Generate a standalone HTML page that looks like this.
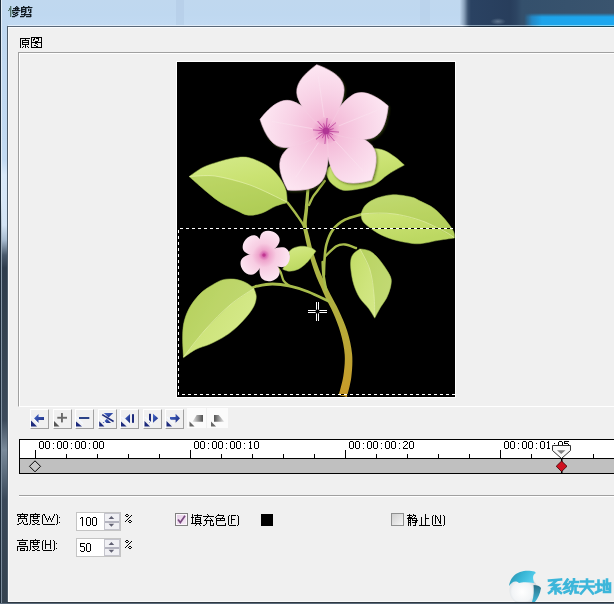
<!DOCTYPE html>
<html><head><meta charset="utf-8">
<style>
*{margin:0;padding:0;box-sizing:border-box}
html,body{width:614px;height:604px;overflow:hidden;background:#f0f0f0;font-family:"Liberation Sans",sans-serif;font-size:12px;color:#000}
.a{position:absolute}
#title{left:0;top:0;width:614px;height:25px;background:linear-gradient(180deg,#c0d8ef 0%,#bfd8f0 60%,#c2daf2 100%)}
#frameL{left:0;top:0;width:8px;height:604px;background:linear-gradient(180deg,#a9c3de 0%,#b8d0ea 30%,#8aa4c0 45%,#44546a 60%,#3c4a5c 100%)}
#client{left:8px;top:26px;width:606px;height:576px;background:#f0f0f0;border-top:1px solid #4e5a68;border-left:1px solid #56626e}
#frameB{left:0;top:601px;width:614px;height:3px;background:#3a4656}
.txt{white-space:nowrap;line-height:1}.cj{font-weight:bold}
.btn{position:absolute;top:409px;width:19px;height:20px;border-top:1px solid #fff;border-left:1px solid #fff;border-right:1px solid #a0a0a0;border-bottom:1px solid #a0a0a0;background:#f0f0f0}
.tc{position:absolute;top:440px;font-size:11px;line-height:11px;white-space:nowrap}.tc i{font-style:normal;display:inline-block;width:6px;text-align:center}
</style></head><body>
<div id="title" class="a"></div>
<div class="a" style="left:176px;top:0;width:8px;height:25px;background:#b0c8e2;opacity:.45"></div>
<div class="a" style="left:420px;top:0;width:10px;height:25px;background:#b8d0ea;opacity:.6"></div>
<div class="a" style="left:460px;top:0;width:154px;height:25px;background:linear-gradient(90deg,#bcd4ec 0px,#8aa2bc 4px,#3c5472 8px,#2a4262 11px,#283e5c 50px,#2c4462 56px,#34506c 62px,#3a546e 154px)"></div>
<div class="a" style="left:490px;top:18px;width:16px;height:7px;border-radius:50%;background:radial-gradient(ellipse at center,rgba(140,160,180,.55),rgba(140,160,180,0) 70%)"></div>
<div class="a" style="left:524px;top:13px;width:90px;height:12px;background:linear-gradient(90deg,rgba(30,160,235,0) 0px,rgba(30,160,235,.7) 8px,#1ea4ea 18px,#1ea8f0 94px);-webkit-mask-image:linear-gradient(180deg,transparent 0px,#000 4px)"></div>
<div class="a" style="left:0;top:25px;width:614px;height:1px;background:linear-gradient(90deg,#e2eefa 0px,#e2eefa 462px,#8aa0b4 470px,#8aa0b4 524px,#80d4f6 540px,#80d8f8 614px)"></div>
<div class="a" style="left:0;top:26px;width:614px;height:1px;background:linear-gradient(90deg,#5a6878 0px,#5a6878 462px,#1c2a3a 470px,#1c2a3a 524px,#1a4a5c 540px,#1a4a5c 614px)"></div>

<div class="a" style="left:0;top:0;width:8px;height:604px;background:linear-gradient(180deg,#c0d8f0 0px,#c2daf2 160px,#d8e8f8 175px,#d4e4f4 225px,#a8bcd0 240px,#4a5a6c 255px,#2e3c4c 268px,#34424f 330px,#3c4a5a 420px,#7a8a9a 450px,#5a6a7a 475px,#3a4858 500px,#34424f 604px)"></div>
<div class="a" style="left:0;top:0;width:1px;height:604px;background:#1e2c3a"></div>
<div class="a" style="left:1px;top:0;width:1px;height:604px;background:linear-gradient(180deg,#e4eef8 0px,#e4eef8 200px,#8898a8 260px,#7a8a9a 604px)"></div>
<div class="a" style="left:7px;top:26px;width:1px;height:577px;background:#4e5c6a"></div>
<div class="a" style="left:8px;top:27px;width:606px;height:575px;background:#f0f0f0;border-top:1px solid #fafcfe;border-left:1px solid #fafafa;border-bottom:1px solid #fafafa"></div>
<div class="a" style="left:7px;top:602px;width:607px;height:1px;background:#2e3842"></div>
<div class="a" style="left:0;top:603px;width:614px;height:1px;background:#5a6a7a"></div>

<!-- group box -->

<div class="a" style="left:18px;top:52px;width:596px;height:355px;border-top:1px solid #a0a0a0;border-left:1px solid #a0a0a0;border-bottom:1px solid #fff"></div>
<div class="a" style="left:19px;top:53px;width:1px;height:353px;background:#fff"></div>
<div class="a" style="left:19px;top:53px;width:595px;height:1px;background:#fff"></div>

<!-- image -->
<svg class="a" style="left:176px;top:61px" width="280" height="337" viewBox="176 61 280 337">
  <defs>
    <filter id="psh" x="-20%" y="-20%" width="140%" height="140%"><feDropShadow dx="1.2" dy="1.2" stdDeviation="0.9" flood-color="#3a4a10" flood-opacity="0.75"/></filter>
    <radialGradient id="pg" cx="0" cy="0" r="68" gradientUnits="userSpaceOnUse">
      <stop offset="0" stop-color="#b03494"/>
      <stop offset="0.04" stop-color="#c858a8"/>
      <stop offset="0.09" stop-color="#e892c6"/>
      <stop offset="0.2" stop-color="#f4bcd9"/>
      <stop offset="0.55" stop-color="#f8d2e6"/>
      <stop offset="1" stop-color="#fde8f3"/>
    </radialGradient>
    <radialGradient id="pg2" cx="0" cy="0" r="27" gradientUnits="userSpaceOnUse">
      <stop offset="0" stop-color="#c03894"/>
      <stop offset="0.08" stop-color="#d868b0"/>
      <stop offset="0.2" stop-color="#eea4cc"/>
      <stop offset="0.45" stop-color="#f7cce2"/>
      <stop offset="1" stop-color="#fde8f3"/>
    </radialGradient>
    <linearGradient id="stem" x1="0" y1="185" x2="0" y2="396" gradientUnits="userSpaceOnUse">
      <stop offset="0" stop-color="#a8c050"/>
      <stop offset="0.55" stop-color="#b0b040"/>
      <stop offset="1" stop-color="#c89a28"/>
    </linearGradient>
    <linearGradient id="lfA" x1="0" y1="0" x2="0.3" y2="1">
      <stop offset="0" stop-color="#d4ea8a"/>
      <stop offset="0.5" stop-color="#cae272"/>
      <stop offset="1" stop-color="#bcd862"/>
    </linearGradient>
    <linearGradient id="lfB" x1="0" y1="0" x2="1" y2="0.6">
      <stop offset="0" stop-color="#c2dc66"/>
      <stop offset="0.5" stop-color="#cee47c"/>
      <stop offset="1" stop-color="#d6ea8c"/>
    </linearGradient>
  <clipPath id="cl_topleft"><path d="M189.1 176.5 C189.1 176.5 197.9 169.9 202.8 167.4 C207.8 164.9 213.9 163.2 218.8 161.7 C223.7 160.2 227.9 159.0 232.4 158.2 C236.9 157.4 241.5 156.5 246.1 157.1 C250.7 157.7 255.6 159.8 259.8 161.7 C264.0 163.6 267.8 165.7 271.2 168.5 C274.6 171.3 277.8 175.2 280.3 178.8 C282.8 182.4 284.9 186.2 286.0 190.2 C287.1 194.2 287.2 202.7 287.2 202.7 C287.2 202.7 280.0 204.4 275.8 206.1 C271.6 207.8 266.7 211.5 262.1 213.0 C257.5 214.5 252.6 215.6 248.4 215.2 C244.2 214.8 241.6 212.8 237.0 210.7 C232.4 208.6 225.9 205.8 221.0 202.7 C216.1 199.6 212.7 196.8 207.4 192.4 C202.1 188.0 189.1 176.5 189.1 176.5 Z"/></clipPath><clipPath id="cl_rmid"><path d="M361.0 214.1 C361.0 214.1 362.9 207.7 365.6 205.0 C368.3 202.3 372.4 199.8 377.0 198.1 C381.6 196.4 387.3 194.9 393.0 194.7 C398.7 194.5 406.6 195.9 411.2 197.0 C415.8 198.1 416.5 199.2 420.3 201.1 C424.1 203.0 429.8 205.3 434.0 208.4 C438.2 211.5 442.2 216.0 445.4 219.8 C448.6 223.6 451.9 228.2 453.4 231.2 C454.9 234.2 454.5 238.0 454.5 238.0 C454.5 238.0 444.3 239.4 438.6 240.3 C432.9 241.2 425.6 243.3 420.3 243.7 C415.0 244.1 411.9 243.5 406.6 242.6 C401.3 241.7 393.7 239.9 388.4 238.0 C383.1 236.1 378.9 233.8 374.7 231.2 C370.5 228.5 365.6 224.9 363.3 222.1 C361.0 219.2 361.0 214.1 361.0 214.1 Z"/></clipPath><clipPath id="cl_rlow"><path d="M359.8 248.9 C359.8 248.9 367.0 249.4 370.2 251.2 C373.4 252.9 376.5 256.3 379.2 259.4 C381.9 262.5 384.6 266.6 386.6 269.8 C388.6 273.0 390.5 275.7 391.1 278.7 C391.7 281.7 391.1 284.5 390.4 287.7 C389.6 290.9 388.2 294.9 386.6 298.1 C385.0 301.3 382.7 303.8 380.7 307.1 C378.7 310.5 374.7 318.2 374.7 318.2 C374.7 318.2 371.2 312.0 368.7 308.6 C366.2 305.2 362.3 302.1 359.8 298.1 C357.3 294.1 355.3 289.4 353.8 284.7 C352.3 280.0 351.4 274.0 350.9 269.8 C350.4 265.6 350.4 262.1 350.9 259.4 C351.4 256.7 352.3 255.2 353.8 253.4 C355.3 251.7 359.8 248.9 359.8 248.9 Z"/></clipPath><clipPath id="cl_llow"><path d="M253.8 288.2 C253.8 288.2 248.8 283.9 245.5 282.4 C242.2 280.9 237.8 279.5 234.0 279.1 C230.2 278.7 226.0 278.9 222.4 279.9 C218.8 280.9 215.7 283.0 212.4 284.9 C209.1 286.8 205.5 288.9 202.5 291.5 C199.5 294.1 196.7 297.3 194.2 300.6 C191.7 303.9 189.4 307.4 187.6 311.4 C185.8 315.4 184.3 319.9 183.5 324.6 C182.7 329.3 182.6 334.0 182.6 339.5 C182.6 345.0 183.5 357.7 183.5 357.7 C183.5 357.7 191.6 351.6 195.9 349.4 C200.2 347.2 204.7 346.4 209.1 344.5 C213.5 342.6 218.2 340.3 222.4 337.8 C226.6 335.3 230.2 332.9 234.0 329.6 C237.8 326.3 242.2 321.9 245.5 318.0 C248.8 314.1 252.0 310.0 253.8 306.4 C255.6 302.8 256.3 299.5 256.3 296.5 C256.3 293.5 253.8 288.2 253.8 288.2 Z"/></clipPath></defs>
  <rect x="176" y="61" width="280" height="337" fill="#fff"/>
  <rect x="177" y="62" width="278" height="335" fill="#000"/>
  <!-- stems -->
  <path d="M306.7 185.9 C306.7 185.9 305.4 201.5 304.8 208.0 C304.2 214.4 302.9 219.7 303.0 224.8 C303.1 229.8 304.3 233.3 305.3 238.4 C306.4 243.4 307.7 249.4 309.3 255.1 C310.9 260.9 313.1 267.7 315.0 272.9 C316.8 278.0 318.8 282.0 320.5 286.1 C322.3 290.2 323.3 292.7 325.4 297.3 C327.5 301.8 330.7 307.3 333.3 313.3 C335.8 319.2 338.7 326.0 340.6 332.9 C342.5 339.9 344.3 347.5 344.7 354.7 C345.2 361.9 344.3 369.5 343.3 376.3 C342.3 383.0 338.7 395.0 338.7 395.0 C338.7 395.0 346.9 397.0 346.9 397.0 C346.9 397.0 350.4 384.5 351.3 377.3 C352.1 370.2 352.8 361.8 352.1 354.1 C351.4 346.4 349.4 338.3 347.2 331.1 C345.0 323.8 341.7 316.8 338.9 310.7 C336.2 304.7 332.9 299.2 330.6 294.7 C328.4 290.3 327.3 287.8 325.5 283.9 C323.6 280.0 321.6 276.1 319.6 271.1 C317.7 266.1 315.4 259.5 313.7 253.9 C312.0 248.2 310.6 242.3 309.5 237.4 C308.3 232.6 307.0 229.5 306.8 224.6 C306.6 219.8 307.7 214.7 308.2 208.2 C308.7 201.8 309.7 186.1 309.7 186.1 C309.7 186.1 306.7 185.9 306.7 185.9 Z" fill="url(#stem)"/><path d="M324.7 181.0 C323.6 182.5 319.9 187.4 318.0 190.0 C316.1 192.6 314.6 194.0 313.1 196.5 C311.6 199.0 309.7 203.6 309.0 205.0" fill="none" stroke="#a8bc4c" stroke-width="2.4" stroke-linecap="round"/><path d="M287.5 202.5 C289.0 204.5 294.0 211.0 296.6 214.7 C299.2 218.4 301.7 221.8 303.2 224.7 C304.7 227.6 305.1 230.8 305.5 232.0" fill="none" stroke="#a8bc4c" stroke-width="2.4" stroke-linecap="round"/><path d="M323.9 275.0 C324.0 272.5 324.1 265.1 324.5 260.0 C324.9 254.9 325.0 249.6 326.4 244.5 C327.8 239.4 329.9 233.7 333.0 229.6 C336.1 225.5 340.3 222.2 345.0 219.7 C349.7 217.2 358.3 215.4 361.0 214.5" fill="none" stroke="#a8bc4c" stroke-width="2.6" stroke-linecap="round"/><path d="M325.5 256.0 C327.3 254.4 333.1 248.1 336.3 246.2 C339.6 244.3 341.7 244.2 345.0 244.5 C348.3 244.8 354.2 247.4 356.0 248.0" fill="none" stroke="#a8bc4c" stroke-width="2.4" stroke-linecap="round"/><path d="M328.2 301.0 C324.9 299.5 314.4 294.3 308.1 291.8 C301.8 289.3 296.1 287.5 290.2 286.2 C284.2 284.9 278.0 284.0 272.4 284.0 C266.8 284.0 260.1 285.5 256.7 286.2 C253.3 286.9 252.8 287.7 252.0 288.0" fill="none" stroke="#a8bc4c" stroke-width="2.8" stroke-linecap="round"/><path d="M265.0 259.0 C267.3 260.8 275.9 265.9 279.0 269.5 C282.1 273.1 281.7 277.8 283.5 280.6 C285.3 283.4 288.9 285.3 290.0 286.2" fill="none" stroke="#a8bc4c" stroke-width="2.2" stroke-linecap="round"/><path d="M322.7 262.0 C322.8 264.2 322.9 270.3 323.5 275.0 C324.1 279.7 325.6 287.5 326.0 290.0" fill="none" stroke="#a8bc4c" stroke-width="2.6" stroke-linecap="round"/>
  <!-- leaves -->
  <path d="M404.4 165.1 C404.4 165.1 398.6 159.6 395.2 157.1 C391.8 154.6 387.7 151.7 383.8 150.3 C379.9 148.9 376.8 148.2 372.0 148.5 C367.2 148.8 360.3 150.1 355.0 152.0 C349.7 153.9 344.3 157.5 340.0 160.0 C335.7 162.5 331.2 164.6 329.0 167.0 C326.8 169.4 326.4 171.5 326.8 174.2 C327.2 176.9 328.7 180.6 331.4 183.3 C334.1 186.0 338.2 189.2 342.8 190.2 C347.4 191.1 353.5 189.9 358.8 189.0 C364.1 188.1 369.8 187.0 374.7 184.5 C379.6 182.0 383.4 177.4 388.4 174.2 C393.3 171.0 404.4 165.1 404.4 165.1 Z" fill="url(#lfA)" stroke="#9cb850" stroke-width="0.5"/><path d="M189.1 176.5 C189.1 176.5 197.9 169.9 202.8 167.4 C207.8 164.9 213.9 163.2 218.8 161.7 C223.7 160.2 227.9 159.0 232.4 158.2 C236.9 157.4 241.5 156.5 246.1 157.1 C250.7 157.7 255.6 159.8 259.8 161.7 C264.0 163.6 267.8 165.7 271.2 168.5 C274.6 171.3 277.8 175.2 280.3 178.8 C282.8 182.4 284.9 186.2 286.0 190.2 C287.1 194.2 287.2 202.7 287.2 202.7 C287.2 202.7 280.0 204.4 275.8 206.1 C271.6 207.8 266.7 211.5 262.1 213.0 C257.5 214.5 252.6 215.6 248.4 215.2 C244.2 214.8 241.6 212.8 237.0 210.7 C232.4 208.6 225.9 205.8 221.0 202.7 C216.1 199.6 212.7 196.8 207.4 192.4 C202.1 188.0 189.1 176.5 189.1 176.5 Z" fill="url(#lfA)" stroke="#9cb850" stroke-width="0.5"/><path d="M361.0 214.1 C361.0 214.1 362.9 207.7 365.6 205.0 C368.3 202.3 372.4 199.8 377.0 198.1 C381.6 196.4 387.3 194.9 393.0 194.7 C398.7 194.5 406.6 195.9 411.2 197.0 C415.8 198.1 416.5 199.2 420.3 201.1 C424.1 203.0 429.8 205.3 434.0 208.4 C438.2 211.5 442.2 216.0 445.4 219.8 C448.6 223.6 451.9 228.2 453.4 231.2 C454.9 234.2 454.5 238.0 454.5 238.0 C454.5 238.0 444.3 239.4 438.6 240.3 C432.9 241.2 425.6 243.3 420.3 243.7 C415.0 244.1 411.9 243.5 406.6 242.6 C401.3 241.7 393.7 239.9 388.4 238.0 C383.1 236.1 378.9 233.8 374.7 231.2 C370.5 228.5 365.6 224.9 363.3 222.1 C361.0 219.2 361.0 214.1 361.0 214.1 Z" fill="url(#lfA)" stroke="#9cb850" stroke-width="0.5"/><path d="M359.8 248.9 C359.8 248.9 367.0 249.4 370.2 251.2 C373.4 252.9 376.5 256.3 379.2 259.4 C381.9 262.5 384.6 266.6 386.6 269.8 C388.6 273.0 390.5 275.7 391.1 278.7 C391.7 281.7 391.1 284.5 390.4 287.7 C389.6 290.9 388.2 294.9 386.6 298.1 C385.0 301.3 382.7 303.8 380.7 307.1 C378.7 310.5 374.7 318.2 374.7 318.2 C374.7 318.2 371.2 312.0 368.7 308.6 C366.2 305.2 362.3 302.1 359.8 298.1 C357.3 294.1 355.3 289.4 353.8 284.7 C352.3 280.0 351.4 274.0 350.9 269.8 C350.4 265.6 350.4 262.1 350.9 259.4 C351.4 256.7 352.3 255.2 353.8 253.4 C355.3 251.7 359.8 248.9 359.8 248.9 Z" fill="url(#lfB)" stroke="#9cb850" stroke-width="0.5"/><path d="M253.8 288.2 C253.8 288.2 248.8 283.9 245.5 282.4 C242.2 280.9 237.8 279.5 234.0 279.1 C230.2 278.7 226.0 278.9 222.4 279.9 C218.8 280.9 215.7 283.0 212.4 284.9 C209.1 286.8 205.5 288.9 202.5 291.5 C199.5 294.1 196.7 297.3 194.2 300.6 C191.7 303.9 189.4 307.4 187.6 311.4 C185.8 315.4 184.3 319.9 183.5 324.6 C182.7 329.3 182.6 334.0 182.6 339.5 C182.6 345.0 183.5 357.7 183.5 357.7 C183.5 357.7 191.6 351.6 195.9 349.4 C200.2 347.2 204.7 346.4 209.1 344.5 C213.5 342.6 218.2 340.3 222.4 337.8 C226.6 335.3 230.2 332.9 234.0 329.6 C237.8 326.3 242.2 321.9 245.5 318.0 C248.8 314.1 252.0 310.0 253.8 306.4 C255.6 302.8 256.3 299.5 256.3 296.5 C256.3 293.5 253.8 288.2 253.8 288.2 Z" fill="url(#lfB)" stroke="#9cb850" stroke-width="0.5"/><path d="M316.0 251.1 C316.0 251.1 313.3 248.5 311.0 247.7 C308.7 246.9 305.1 246.2 302.3 246.2 C299.5 246.2 296.6 246.8 294.4 247.7 C292.2 248.6 289.9 250.4 289.1 251.6 C288.3 252.8 289.6 253.6 289.5 255.0 C289.4 256.4 289.5 257.9 288.5 260.0 C287.5 262.1 284.7 265.8 283.7 267.3 C282.7 268.8 282.7 269.2 282.7 269.2 C282.7 269.2 286.9 271.2 289.5 271.2 C292.1 271.2 295.5 270.5 298.3 269.2 C301.1 267.9 303.9 265.4 306.2 263.3 C308.5 261.2 310.4 258.5 312.0 256.5 C313.6 254.5 316.0 251.1 316.0 251.1 Z" fill="url(#lfA)" stroke="#9cb850" stroke-width="0.5"/><path d="M287 202 L250 185 L215 176 L189.5 176.5 L180 240 L300 240 Z" clip-path="url(#cl_topleft)" fill="#98b840" opacity="0.32"/><path d="M361 214 L395 214 L425 222 L454 237.5 L470 180 L350 180 Z" clip-path="url(#cl_rmid)" fill="#98b840" opacity="0.32"/><path d="M360 249 L370 270 L374 295 L374.7 317 L374.7 330 L400 330 L400 240 Z" clip-path="url(#cl_rlow)" fill="#98b840" opacity="0.32"/><path d="M253.8 288.5 L230 305 L205 330 L183.5 357 L170 370 L170 270 L260 270 Z" clip-path="url(#cl_llow)" fill="#98b840" opacity="0.32"/><path d="M287.0 202.0 C280.8 199.2 262.0 189.3 250.0 185.0 C238.0 180.7 225.1 177.4 215.0 176.0 C204.9 174.6 193.8 176.4 189.5 176.5" fill="none" stroke="#e2eea8" stroke-width="0.9" opacity="0.8"/><path d="M361 214 C372 213 385 212.5 395 214 C407 216 417 219 425 222 C436 227 447 232 454 237.5" fill="none" stroke="#e2eea8" stroke-width="0.9" opacity="0.8"/><path d="M360.0 249.0 C361.7 252.5 367.7 262.3 370.0 270.0 C372.3 277.7 373.2 287.2 374.0 295.0 C374.8 302.8 374.6 313.3 374.7 317.0" fill="none" stroke="#e2eea8" stroke-width="0.9" opacity="0.8"/><path d="M253.8 288.5 C249.8 291.2 238.1 298.1 230.0 305.0 C221.9 311.9 212.8 321.3 205.0 330.0 C197.2 338.7 187.1 352.5 183.5 357.0" fill="none" stroke="#e2eea8" stroke-width="0.9" opacity="0.8"/>
  <!-- big flower petals -->
  <g transform="translate(326 131)" filter="url(#psh)">
    <path transform="rotate(137)" d="M0 0 C-6 -6 -21 -23 -23.5 -38 C-25 -49 -17 -58 0 -67 C17 -58 25 -49 23.5 -38 C21 -23 6 -6 0 0 Z" fill="url(#pg)" stroke="#f6cfe2" stroke-width="0.5"/>
    <path transform="rotate(213) scale(1 1.05)" d="M0 0 C-6 -6 -21 -23 -23.5 -38 C-25 -49 -17 -58 0 -67 C17 -58 25 -49 23.5 -38 C21 -23 6 -6 0 0 Z" fill="url(#pg)" stroke="#f6cfe2" stroke-width="0.5"/>
    <path transform="rotate(68)" d="M0 0 C-6 -6 -21 -23 -23.5 -38 C-25 -49 -17 -58 0 -67 C17 -58 25 -49 23.5 -38 C21 -23 6 -6 0 0 Z" fill="url(#pg)" stroke="#f6cfe2" stroke-width="0.5"/>
    <path transform="rotate(280)" d="M0 0 C-6 -6 -21 -23 -23.5 -38 C-25 -49 -17 -58 0 -67 C17 -58 25 -49 23.5 -38 C21 -23 6 -6 0 0 Z" fill="url(#pg)" stroke="#f6cfe2" stroke-width="0.5"/>
    <path transform="rotate(-8)" d="M0 0 C-6 -6 -21 -23 -23.5 -38 C-25 -49 -17 -58 0 -67 C17 -58 25 -49 23.5 -38 C21 -23 6 -6 0 0 Z" fill="url(#pg)" stroke="#f6cfe2" stroke-width="0.5"/>
    <g stroke="#fae6f0" stroke-width="0.9" opacity="0.55"><line x1="9.5" y1="10.2" x2="37.5" y2="40.2"/><line x1="-7.6" y1="11.7" x2="-30.0" y2="46.1"/><line x1="13.0" y1="-5.2" x2="51.0" y2="-20.6"/><line x1="-13.8" y1="-2.4" x2="-54.2" y2="-9.6"/><line x1="-1.9" y1="-13.9" x2="-7.7" y2="-54.5"/></g><g stroke="#b83c98" stroke-width="1" opacity="0.75"><line x1="0" y1="0" x2="13.0" y2="1.1"/><line x1="0" y1="0" x2="7.1" y2="3.7"/><line x1="0" y1="0" x2="8.4" y2="10.0"/><line x1="0" y1="0" x2="2.4" y2="7.6"/><line x1="0" y1="0" x2="-1.1" y2="13.0"/><line x1="0" y1="0" x2="-3.7" y2="7.1"/><line x1="0" y1="0" x2="-10.0" y2="8.4"/><line x1="0" y1="0" x2="-7.6" y2="2.4"/><line x1="0" y1="0" x2="-13.0" y2="-1.1"/><line x1="0" y1="0" x2="-7.1" y2="-3.7"/><line x1="0" y1="0" x2="-8.4" y2="-10.0"/><line x1="0" y1="0" x2="-2.4" y2="-7.6"/><line x1="0" y1="0" x2="1.1" y2="-13.0"/><line x1="0" y1="0" x2="3.7" y2="-7.1"/><line x1="0" y1="0" x2="10.0" y2="-8.4"/><line x1="0" y1="0" x2="7.6" y2="-2.4"/></g>
    <circle r="3.2" fill="#b03494"/>
  </g>
  <!-- small flower -->
  <g transform="translate(264 255)">
    <path transform="rotate(-50) scale(1 0.923)" d="M0 0 C-6 -5 -10 -12 -10 -18 C-10 -23 -5 -26 0 -26 C5 -26 10 -23 10 -18 C10 -12 6 -5 0 0 Z" fill="url(#pg2)"/>
    <path transform="rotate(20) scale(1 0.962)" d="M0 0 C-6 -5 -10 -12 -10 -18 C-10 -23 -5 -26 0 -26 C5 -26 10 -23 10 -18 C10 -12 6 -5 0 0 Z" fill="url(#pg2)"/>
    <path transform="rotate(97) scale(1 1.000)" d="M0 0 C-6 -5 -10 -12 -10 -18 C-10 -23 -5 -26 0 -26 C5 -26 10 -23 10 -18 C10 -12 6 -5 0 0 Z" fill="url(#pg2)"/>
    <path transform="rotate(162) scale(1 1.038)" d="M0 0 C-6 -5 -10 -12 -10 -18 C-10 -23 -5 -26 0 -26 C5 -26 10 -23 10 -18 C10 -12 6 -5 0 0 Z" fill="url(#pg2)"/>
    <path transform="rotate(235) scale(1 1.000)" d="M0 0 C-6 -5 -10 -12 -10 -18 C-10 -23 -5 -26 0 -26 C5 -26 10 -23 10 -18 C10 -12 6 -5 0 0 Z" fill="url(#pg2)"/>
    <circle r="1.6" fill="#c03890"/>
  </g>
  <!-- dashed selection -->
  <path d="M178 228.5 H455 M178.5 228 V395 M178 394.5 H455" fill="none" stroke="#000" stroke-width="1"/>
  <path d="M178 228.5 H455" fill="none" stroke="#fff" stroke-width="1" stroke-dasharray="3 3" stroke-dashoffset="4"/>
  <path d="M178.5 228 V395" fill="none" stroke="#fff" stroke-width="1" stroke-dasharray="3 3" stroke-dashoffset="4"/>
  <path d="M178 394.5 H455" fill="none" stroke="#fff" stroke-width="1" stroke-dasharray="3 3" stroke-dashoffset="2"/>
  <!-- cursor -->
  <g fill="#fff">
  <rect x="316" y="302" width="1" height="8"/><rect x="318" y="302" width="1" height="8"/>
  <rect x="316" y="313" width="1" height="8"/><rect x="318" y="313" width="1" height="8"/>
  <rect x="308" y="310" width="8" height="1"/><rect x="308" y="312" width="8" height="1"/>
  <rect x="319" y="310" width="8" height="1"/><rect x="319" y="312" width="8" height="1"/>
  </g>
  <rect x="315.5" y="309.5" width="4" height="4" rx="1.5" fill="#000"/>
</svg>

<!-- toolbar -->
<div class="btn" style="left:30px"></div>
<div class="btn" style="left:53px"></div>
<div class="btn" style="left:75px"></div>
<div class="btn" style="left:98px"></div>
<div class="btn" style="left:120px"></div>
<div class="btn" style="left:143px"></div>
<div class="btn" style="left:165px"></div>
<div class="a" style="left:187px;top:408px;width:19px;height:20px;background:#fbfbfb"></div>
<div class="a" style="left:207px;top:408px;width:21px;height:20px;background:#fbfbfb"></div>
<svg class="a" style="left:0;top:400px" width="240" height="40" viewBox="0 400 240 40">
<defs>
<linearGradient id="bl" x1="0" y1="0" x2="1" y2="1"><stop offset="0" stop-color="#4a6cd0"/><stop offset="1" stop-color="#18287a"/></linearGradient>
<linearGradient id="g8" x1="0" y1="0" x2="1" y2="0"><stop offset="0" stop-color="#e8e8e8"/><stop offset="1" stop-color="#505050"/></linearGradient>
<linearGradient id="g9" x1="1" y1="0" x2="0" y2="0"><stop offset="0" stop-color="#e8e8e8"/><stop offset="1" stop-color="#505050"/></linearGradient>
</defs>
<g fill="url(#bl)">
<!-- b1 -->
<path d="M31 420.5 L31 426.5 L37 426.5 Z" fill="#1c2a7c"/>
<path d="M34 418.5 L38.5 414 L38.5 417 L44 417 L44 420 L38.5 420 L38.5 423 Z"/>
<!-- b3 -->
<path d="M76 421.5 L76 426.5 L82 426.5 Z" fill="#1c2a7c"/>
<rect x="79" y="417" width="10.3" height="2" fill="#2c4488"/>
<!-- b4 -->
<path d="M99.2 421.3 L99.2 426.4 L104.4 426.4 Z" fill="#1c2a7c"/>
<path d="M103.8 413 L113.2 413 L108.6 417.4 Z"/>
<path d="M102.6 423 L111 423 L106.8 418.8 Z"/>
<path d="M102.2 414.6 L113.6 421.5" stroke="#1c2a7c" stroke-width="1.6"/>
<!-- b5 -->
<path d="M121 421.5 L121 426.4 L126.6 426.4 Z" fill="#1c2a7c"/>
<path d="M125.1 418.5 L130 414 L130 423.2 Z"/>
<rect x="132" y="414.2" width="2" height="8.6" fill="#1c2a7c"/>
<!-- b6 -->
<path d="M144.5 421 L144.5 426.5 L150 426.5 Z" fill="#1c2a7c"/>
<rect x="149" y="413.8" width="2" height="9" fill="#1c2a7c"/>
<path d="M153 413.8 L158.2 418.3 L153 422.8 Z"/>
<!-- b7 -->
<path d="M166.5 421 L166.5 426.5 L172 426.5 Z" fill="#1c2a7c"/>
<path d="M170 417 L175.6 417 L175.6 413.8 L180 418.3 L175.6 422.8 L175.6 419.7 L170 419.7 Z"/>
</g>
<!-- b2 gray -->
<path d="M54 421 L54 426.5 L59.5 426.5 Z" fill="#555"/>
<rect x="57.3" y="416.8" width="9.7" height="1.9" fill="#6a6a6a"/>
<rect x="61" y="413" width="1.9" height="9.4" fill="#6a6a6a"/>
<!-- white stripes -->
<g stroke="#f4f8ff" stroke-width="1.4">
<path d="M31 416.5 L39 424.5"/>
<path d="M76 417 L83 424"/>
<path d="M100 417.5 L107 424.5"/>
<path d="M121.5 417 L129 424.5"/>
<path d="M145 417 L152 424"/>
<path d="M167 417 L174 424"/>
</g>
<!-- b8/b9 disabled -->
<path d="M189.5 421.5 L189.5 426.6 L194.5 426.6 Z" fill="#666"/>
<path d="M192.5 421.7 L196.7 414.9 L203 414.9 L203 421.7 Z" fill="url(#g8)"/>
<path d="M211 421.5 L211 426.6 L216 426.6 Z" fill="#666"/>
<path d="M214 414.9 L218.7 414.9 L224.3 421.7 L214 421.7 Z" fill="url(#g9)"/>
</svg>

<!-- timeline -->
<div class="a" style="left:19px;top:439px;width:595px;height:35px;border:1px solid #000;border-right:none;background:#fff"></div>
<div class="a" style="left:20px;top:458px;width:594px;height:1px;background:#000"></div>
<div class="a" style="left:20px;top:459px;width:594px;height:14px;background:#c0c0c0"></div>

<svg class="a" style="left:0;top:436px" width="614" height="42" viewBox="0 436 614 42">
<g fill="#000"><rect x="35" y="450" width="1" height="8"/><rect x="66" y="454" width="1" height="4"/><rect x="97" y="454" width="1" height="4"/><rect x="128" y="454" width="1" height="4"/><rect x="159" y="454" width="1" height="4"/><rect x="190" y="450" width="1" height="8"/><rect x="221" y="454" width="1" height="4"/><rect x="252" y="454" width="1" height="4"/><rect x="283" y="454" width="1" height="4"/><rect x="314" y="454" width="1" height="4"/><rect x="345" y="450" width="1" height="8"/><rect x="376" y="454" width="1" height="4"/><rect x="407" y="454" width="1" height="4"/><rect x="438" y="454" width="1" height="4"/><rect x="469" y="454" width="1" height="4"/><rect x="500" y="450" width="1" height="8"/><rect x="531" y="454" width="1" height="4"/><rect x="562" y="454" width="1" height="4"/><rect x="593" y="454" width="1" height="4"/></g>
<g fill="#000" shape-rendering="crispEdges"><rect x="40" y="441" width="3" height="1"/><rect x="46" y="441" width="3" height="1"/><rect x="58" y="441" width="3" height="1"/><rect x="64" y="441" width="3" height="1"/><rect x="76" y="441" width="3" height="1"/><rect x="82" y="441" width="3" height="1"/><rect x="94" y="441" width="3" height="1"/><rect x="100" y="441" width="3" height="1"/><rect x="195" y="441" width="3" height="1"/><rect x="201" y="441" width="3" height="1"/><rect x="213" y="441" width="3" height="1"/><rect x="219" y="441" width="3" height="1"/><rect x="231" y="441" width="3" height="1"/><rect x="237" y="441" width="3" height="1"/><rect x="250" y="441" width="1" height="1"/><rect x="255" y="441" width="3" height="1"/><rect x="350" y="441" width="3" height="1"/><rect x="356" y="441" width="3" height="1"/><rect x="368" y="441" width="3" height="1"/><rect x="374" y="441" width="3" height="1"/><rect x="386" y="441" width="3" height="1"/><rect x="392" y="441" width="3" height="1"/><rect x="404" y="441" width="3" height="1"/><rect x="410" y="441" width="3" height="1"/><rect x="505" y="441" width="3" height="1"/><rect x="511" y="441" width="3" height="1"/><rect x="523" y="441" width="3" height="1"/><rect x="529" y="441" width="3" height="1"/><rect x="541" y="441" width="3" height="1"/><rect x="548" y="441" width="1" height="1"/><rect x="559" y="441" width="3" height="1"/><rect x="564" y="441" width="5" height="1"/><rect x="39" y="442" width="1" height="1"/><rect x="43" y="442" width="1" height="1"/><rect x="45" y="442" width="1" height="1"/><rect x="49" y="442" width="1" height="1"/><rect x="57" y="442" width="1" height="1"/><rect x="61" y="442" width="1" height="1"/><rect x="63" y="442" width="1" height="1"/><rect x="67" y="442" width="1" height="1"/><rect x="75" y="442" width="1" height="1"/><rect x="79" y="442" width="1" height="1"/><rect x="81" y="442" width="1" height="1"/><rect x="85" y="442" width="1" height="1"/><rect x="93" y="442" width="1" height="1"/><rect x="97" y="442" width="1" height="1"/><rect x="99" y="442" width="1" height="1"/><rect x="103" y="442" width="1" height="1"/><rect x="194" y="442" width="1" height="1"/><rect x="198" y="442" width="1" height="1"/><rect x="200" y="442" width="1" height="1"/><rect x="204" y="442" width="1" height="1"/><rect x="212" y="442" width="1" height="1"/><rect x="216" y="442" width="1" height="1"/><rect x="218" y="442" width="1" height="1"/><rect x="222" y="442" width="1" height="1"/><rect x="230" y="442" width="1" height="1"/><rect x="234" y="442" width="1" height="1"/><rect x="236" y="442" width="1" height="1"/><rect x="240" y="442" width="1" height="1"/><rect x="249" y="442" width="2" height="1"/><rect x="254" y="442" width="1" height="1"/><rect x="258" y="442" width="1" height="1"/><rect x="349" y="442" width="1" height="1"/><rect x="353" y="442" width="1" height="1"/><rect x="355" y="442" width="1" height="1"/><rect x="359" y="442" width="1" height="1"/><rect x="367" y="442" width="1" height="1"/><rect x="371" y="442" width="1" height="1"/><rect x="373" y="442" width="1" height="1"/><rect x="377" y="442" width="1" height="1"/><rect x="385" y="442" width="1" height="1"/><rect x="389" y="442" width="1" height="1"/><rect x="391" y="442" width="1" height="1"/><rect x="395" y="442" width="1" height="1"/><rect x="403" y="442" width="1" height="1"/><rect x="407" y="442" width="1" height="1"/><rect x="409" y="442" width="1" height="1"/><rect x="413" y="442" width="1" height="1"/><rect x="504" y="442" width="1" height="1"/><rect x="508" y="442" width="1" height="1"/><rect x="510" y="442" width="1" height="1"/><rect x="514" y="442" width="1" height="1"/><rect x="522" y="442" width="1" height="1"/><rect x="526" y="442" width="1" height="1"/><rect x="528" y="442" width="1" height="1"/><rect x="532" y="442" width="1" height="1"/><rect x="540" y="442" width="1" height="1"/><rect x="544" y="442" width="1" height="1"/><rect x="547" y="442" width="2" height="1"/><rect x="558" y="442" width="1" height="1"/><rect x="562" y="442" width="1" height="1"/><rect x="564" y="442" width="1" height="1"/><rect x="39" y="443" width="1" height="1"/><rect x="43" y="443" width="1" height="1"/><rect x="45" y="443" width="1" height="1"/><rect x="49" y="443" width="1" height="1"/><rect x="53" y="443" width="1" height="1"/><rect x="57" y="443" width="1" height="1"/><rect x="61" y="443" width="1" height="1"/><rect x="63" y="443" width="1" height="1"/><rect x="67" y="443" width="1" height="1"/><rect x="71" y="443" width="1" height="1"/><rect x="75" y="443" width="1" height="1"/><rect x="79" y="443" width="1" height="1"/><rect x="81" y="443" width="1" height="1"/><rect x="85" y="443" width="1" height="1"/><rect x="89" y="443" width="1" height="1"/><rect x="93" y="443" width="1" height="1"/><rect x="97" y="443" width="1" height="1"/><rect x="99" y="443" width="1" height="1"/><rect x="103" y="443" width="1" height="1"/><rect x="194" y="443" width="1" height="1"/><rect x="198" y="443" width="1" height="1"/><rect x="200" y="443" width="1" height="1"/><rect x="204" y="443" width="1" height="1"/><rect x="208" y="443" width="1" height="1"/><rect x="212" y="443" width="1" height="1"/><rect x="216" y="443" width="1" height="1"/><rect x="218" y="443" width="1" height="1"/><rect x="222" y="443" width="1" height="1"/><rect x="226" y="443" width="1" height="1"/><rect x="230" y="443" width="1" height="1"/><rect x="234" y="443" width="1" height="1"/><rect x="236" y="443" width="1" height="1"/><rect x="240" y="443" width="1" height="1"/><rect x="244" y="443" width="1" height="1"/><rect x="250" y="443" width="1" height="1"/><rect x="254" y="443" width="1" height="1"/><rect x="258" y="443" width="1" height="1"/><rect x="349" y="443" width="1" height="1"/><rect x="353" y="443" width="1" height="1"/><rect x="355" y="443" width="1" height="1"/><rect x="359" y="443" width="1" height="1"/><rect x="363" y="443" width="1" height="1"/><rect x="367" y="443" width="1" height="1"/><rect x="371" y="443" width="1" height="1"/><rect x="373" y="443" width="1" height="1"/><rect x="377" y="443" width="1" height="1"/><rect x="381" y="443" width="1" height="1"/><rect x="385" y="443" width="1" height="1"/><rect x="389" y="443" width="1" height="1"/><rect x="391" y="443" width="1" height="1"/><rect x="395" y="443" width="1" height="1"/><rect x="399" y="443" width="1" height="1"/><rect x="407" y="443" width="1" height="1"/><rect x="409" y="443" width="1" height="1"/><rect x="413" y="443" width="1" height="1"/><rect x="504" y="443" width="1" height="1"/><rect x="508" y="443" width="1" height="1"/><rect x="510" y="443" width="1" height="1"/><rect x="514" y="443" width="1" height="1"/><rect x="518" y="443" width="1" height="1"/><rect x="522" y="443" width="1" height="1"/><rect x="526" y="443" width="1" height="1"/><rect x="528" y="443" width="1" height="1"/><rect x="532" y="443" width="1" height="1"/><rect x="536" y="443" width="1" height="1"/><rect x="540" y="443" width="1" height="1"/><rect x="544" y="443" width="1" height="1"/><rect x="548" y="443" width="1" height="1"/><rect x="554" y="443" width="1" height="1"/><rect x="558" y="443" width="1" height="1"/><rect x="562" y="443" width="1" height="1"/><rect x="564" y="443" width="4" height="1"/><rect x="39" y="444" width="1" height="1"/><rect x="43" y="444" width="1" height="1"/><rect x="45" y="444" width="1" height="1"/><rect x="49" y="444" width="1" height="1"/><rect x="57" y="444" width="1" height="1"/><rect x="61" y="444" width="1" height="1"/><rect x="63" y="444" width="1" height="1"/><rect x="67" y="444" width="1" height="1"/><rect x="75" y="444" width="1" height="1"/><rect x="79" y="444" width="1" height="1"/><rect x="81" y="444" width="1" height="1"/><rect x="85" y="444" width="1" height="1"/><rect x="93" y="444" width="1" height="1"/><rect x="97" y="444" width="1" height="1"/><rect x="99" y="444" width="1" height="1"/><rect x="103" y="444" width="1" height="1"/><rect x="194" y="444" width="1" height="1"/><rect x="198" y="444" width="1" height="1"/><rect x="200" y="444" width="1" height="1"/><rect x="204" y="444" width="1" height="1"/><rect x="212" y="444" width="1" height="1"/><rect x="216" y="444" width="1" height="1"/><rect x="218" y="444" width="1" height="1"/><rect x="222" y="444" width="1" height="1"/><rect x="230" y="444" width="1" height="1"/><rect x="234" y="444" width="1" height="1"/><rect x="236" y="444" width="1" height="1"/><rect x="240" y="444" width="1" height="1"/><rect x="250" y="444" width="1" height="1"/><rect x="254" y="444" width="1" height="1"/><rect x="258" y="444" width="1" height="1"/><rect x="349" y="444" width="1" height="1"/><rect x="353" y="444" width="1" height="1"/><rect x="355" y="444" width="1" height="1"/><rect x="359" y="444" width="1" height="1"/><rect x="367" y="444" width="1" height="1"/><rect x="371" y="444" width="1" height="1"/><rect x="373" y="444" width="1" height="1"/><rect x="377" y="444" width="1" height="1"/><rect x="385" y="444" width="1" height="1"/><rect x="389" y="444" width="1" height="1"/><rect x="391" y="444" width="1" height="1"/><rect x="395" y="444" width="1" height="1"/><rect x="406" y="444" width="1" height="1"/><rect x="409" y="444" width="1" height="1"/><rect x="413" y="444" width="1" height="1"/><rect x="504" y="444" width="1" height="1"/><rect x="508" y="444" width="1" height="1"/><rect x="510" y="444" width="1" height="1"/><rect x="514" y="444" width="1" height="1"/><rect x="522" y="444" width="1" height="1"/><rect x="526" y="444" width="1" height="1"/><rect x="528" y="444" width="1" height="1"/><rect x="532" y="444" width="1" height="1"/><rect x="540" y="444" width="1" height="1"/><rect x="544" y="444" width="1" height="1"/><rect x="548" y="444" width="1" height="1"/><rect x="558" y="444" width="1" height="1"/><rect x="562" y="444" width="1" height="1"/><rect x="568" y="444" width="1" height="1"/><rect x="39" y="445" width="1" height="1"/><rect x="43" y="445" width="1" height="1"/><rect x="45" y="445" width="1" height="1"/><rect x="49" y="445" width="1" height="1"/><rect x="57" y="445" width="1" height="1"/><rect x="61" y="445" width="1" height="1"/><rect x="63" y="445" width="1" height="1"/><rect x="67" y="445" width="1" height="1"/><rect x="75" y="445" width="1" height="1"/><rect x="79" y="445" width="1" height="1"/><rect x="81" y="445" width="1" height="1"/><rect x="85" y="445" width="1" height="1"/><rect x="93" y="445" width="1" height="1"/><rect x="97" y="445" width="1" height="1"/><rect x="99" y="445" width="1" height="1"/><rect x="103" y="445" width="1" height="1"/><rect x="194" y="445" width="1" height="1"/><rect x="198" y="445" width="1" height="1"/><rect x="200" y="445" width="1" height="1"/><rect x="204" y="445" width="1" height="1"/><rect x="212" y="445" width="1" height="1"/><rect x="216" y="445" width="1" height="1"/><rect x="218" y="445" width="1" height="1"/><rect x="222" y="445" width="1" height="1"/><rect x="230" y="445" width="1" height="1"/><rect x="234" y="445" width="1" height="1"/><rect x="236" y="445" width="1" height="1"/><rect x="240" y="445" width="1" height="1"/><rect x="250" y="445" width="1" height="1"/><rect x="254" y="445" width="1" height="1"/><rect x="258" y="445" width="1" height="1"/><rect x="349" y="445" width="1" height="1"/><rect x="353" y="445" width="1" height="1"/><rect x="355" y="445" width="1" height="1"/><rect x="359" y="445" width="1" height="1"/><rect x="367" y="445" width="1" height="1"/><rect x="371" y="445" width="1" height="1"/><rect x="373" y="445" width="1" height="1"/><rect x="377" y="445" width="1" height="1"/><rect x="385" y="445" width="1" height="1"/><rect x="389" y="445" width="1" height="1"/><rect x="391" y="445" width="1" height="1"/><rect x="395" y="445" width="1" height="1"/><rect x="405" y="445" width="1" height="1"/><rect x="409" y="445" width="1" height="1"/><rect x="413" y="445" width="1" height="1"/><rect x="504" y="445" width="1" height="1"/><rect x="508" y="445" width="1" height="1"/><rect x="510" y="445" width="1" height="1"/><rect x="514" y="445" width="1" height="1"/><rect x="522" y="445" width="1" height="1"/><rect x="526" y="445" width="1" height="1"/><rect x="528" y="445" width="1" height="1"/><rect x="532" y="445" width="1" height="1"/><rect x="540" y="445" width="1" height="1"/><rect x="544" y="445" width="1" height="1"/><rect x="548" y="445" width="1" height="1"/><rect x="558" y="445" width="1" height="1"/><rect x="562" y="445" width="1" height="1"/><rect x="568" y="445" width="1" height="1"/><rect x="39" y="446" width="1" height="1"/><rect x="43" y="446" width="1" height="1"/><rect x="45" y="446" width="1" height="1"/><rect x="49" y="446" width="1" height="1"/><rect x="57" y="446" width="1" height="1"/><rect x="61" y="446" width="1" height="1"/><rect x="63" y="446" width="1" height="1"/><rect x="67" y="446" width="1" height="1"/><rect x="75" y="446" width="1" height="1"/><rect x="79" y="446" width="1" height="1"/><rect x="81" y="446" width="1" height="1"/><rect x="85" y="446" width="1" height="1"/><rect x="93" y="446" width="1" height="1"/><rect x="97" y="446" width="1" height="1"/><rect x="99" y="446" width="1" height="1"/><rect x="103" y="446" width="1" height="1"/><rect x="194" y="446" width="1" height="1"/><rect x="198" y="446" width="1" height="1"/><rect x="200" y="446" width="1" height="1"/><rect x="204" y="446" width="1" height="1"/><rect x="212" y="446" width="1" height="1"/><rect x="216" y="446" width="1" height="1"/><rect x="218" y="446" width="1" height="1"/><rect x="222" y="446" width="1" height="1"/><rect x="230" y="446" width="1" height="1"/><rect x="234" y="446" width="1" height="1"/><rect x="236" y="446" width="1" height="1"/><rect x="240" y="446" width="1" height="1"/><rect x="250" y="446" width="1" height="1"/><rect x="254" y="446" width="1" height="1"/><rect x="258" y="446" width="1" height="1"/><rect x="349" y="446" width="1" height="1"/><rect x="353" y="446" width="1" height="1"/><rect x="355" y="446" width="1" height="1"/><rect x="359" y="446" width="1" height="1"/><rect x="367" y="446" width="1" height="1"/><rect x="371" y="446" width="1" height="1"/><rect x="373" y="446" width="1" height="1"/><rect x="377" y="446" width="1" height="1"/><rect x="385" y="446" width="1" height="1"/><rect x="389" y="446" width="1" height="1"/><rect x="391" y="446" width="1" height="1"/><rect x="395" y="446" width="1" height="1"/><rect x="404" y="446" width="1" height="1"/><rect x="409" y="446" width="1" height="1"/><rect x="413" y="446" width="1" height="1"/><rect x="504" y="446" width="1" height="1"/><rect x="508" y="446" width="1" height="1"/><rect x="510" y="446" width="1" height="1"/><rect x="514" y="446" width="1" height="1"/><rect x="522" y="446" width="1" height="1"/><rect x="526" y="446" width="1" height="1"/><rect x="528" y="446" width="1" height="1"/><rect x="532" y="446" width="1" height="1"/><rect x="540" y="446" width="1" height="1"/><rect x="544" y="446" width="1" height="1"/><rect x="548" y="446" width="1" height="1"/><rect x="558" y="446" width="1" height="1"/><rect x="562" y="446" width="1" height="1"/><rect x="568" y="446" width="1" height="1"/><rect x="39" y="447" width="1" height="1"/><rect x="43" y="447" width="1" height="1"/><rect x="45" y="447" width="1" height="1"/><rect x="49" y="447" width="1" height="1"/><rect x="57" y="447" width="1" height="1"/><rect x="61" y="447" width="1" height="1"/><rect x="63" y="447" width="1" height="1"/><rect x="67" y="447" width="1" height="1"/><rect x="75" y="447" width="1" height="1"/><rect x="79" y="447" width="1" height="1"/><rect x="81" y="447" width="1" height="1"/><rect x="85" y="447" width="1" height="1"/><rect x="93" y="447" width="1" height="1"/><rect x="97" y="447" width="1" height="1"/><rect x="99" y="447" width="1" height="1"/><rect x="103" y="447" width="1" height="1"/><rect x="194" y="447" width="1" height="1"/><rect x="198" y="447" width="1" height="1"/><rect x="200" y="447" width="1" height="1"/><rect x="204" y="447" width="1" height="1"/><rect x="212" y="447" width="1" height="1"/><rect x="216" y="447" width="1" height="1"/><rect x="218" y="447" width="1" height="1"/><rect x="222" y="447" width="1" height="1"/><rect x="230" y="447" width="1" height="1"/><rect x="234" y="447" width="1" height="1"/><rect x="236" y="447" width="1" height="1"/><rect x="240" y="447" width="1" height="1"/><rect x="250" y="447" width="1" height="1"/><rect x="254" y="447" width="1" height="1"/><rect x="258" y="447" width="1" height="1"/><rect x="349" y="447" width="1" height="1"/><rect x="353" y="447" width="1" height="1"/><rect x="355" y="447" width="1" height="1"/><rect x="359" y="447" width="1" height="1"/><rect x="367" y="447" width="1" height="1"/><rect x="371" y="447" width="1" height="1"/><rect x="373" y="447" width="1" height="1"/><rect x="377" y="447" width="1" height="1"/><rect x="385" y="447" width="1" height="1"/><rect x="389" y="447" width="1" height="1"/><rect x="391" y="447" width="1" height="1"/><rect x="395" y="447" width="1" height="1"/><rect x="403" y="447" width="1" height="1"/><rect x="409" y="447" width="1" height="1"/><rect x="413" y="447" width="1" height="1"/><rect x="504" y="447" width="1" height="1"/><rect x="508" y="447" width="1" height="1"/><rect x="510" y="447" width="1" height="1"/><rect x="514" y="447" width="1" height="1"/><rect x="522" y="447" width="1" height="1"/><rect x="526" y="447" width="1" height="1"/><rect x="528" y="447" width="1" height="1"/><rect x="532" y="447" width="1" height="1"/><rect x="540" y="447" width="1" height="1"/><rect x="544" y="447" width="1" height="1"/><rect x="548" y="447" width="1" height="1"/><rect x="558" y="447" width="1" height="1"/><rect x="562" y="447" width="1" height="1"/><rect x="564" y="447" width="1" height="1"/><rect x="568" y="447" width="1" height="1"/><rect x="40" y="448" width="3" height="1"/><rect x="46" y="448" width="3" height="1"/><rect x="53" y="448" width="1" height="1"/><rect x="58" y="448" width="3" height="1"/><rect x="64" y="448" width="3" height="1"/><rect x="71" y="448" width="1" height="1"/><rect x="76" y="448" width="3" height="1"/><rect x="82" y="448" width="3" height="1"/><rect x="89" y="448" width="1" height="1"/><rect x="94" y="448" width="3" height="1"/><rect x="100" y="448" width="3" height="1"/><rect x="195" y="448" width="3" height="1"/><rect x="201" y="448" width="3" height="1"/><rect x="208" y="448" width="1" height="1"/><rect x="213" y="448" width="3" height="1"/><rect x="219" y="448" width="3" height="1"/><rect x="226" y="448" width="1" height="1"/><rect x="231" y="448" width="3" height="1"/><rect x="237" y="448" width="3" height="1"/><rect x="244" y="448" width="1" height="1"/><rect x="249" y="448" width="3" height="1"/><rect x="255" y="448" width="3" height="1"/><rect x="350" y="448" width="3" height="1"/><rect x="356" y="448" width="3" height="1"/><rect x="363" y="448" width="1" height="1"/><rect x="368" y="448" width="3" height="1"/><rect x="374" y="448" width="3" height="1"/><rect x="381" y="448" width="1" height="1"/><rect x="386" y="448" width="3" height="1"/><rect x="392" y="448" width="3" height="1"/><rect x="399" y="448" width="1" height="1"/><rect x="403" y="448" width="5" height="1"/><rect x="410" y="448" width="3" height="1"/><rect x="505" y="448" width="3" height="1"/><rect x="511" y="448" width="3" height="1"/><rect x="518" y="448" width="1" height="1"/><rect x="523" y="448" width="3" height="1"/><rect x="529" y="448" width="3" height="1"/><rect x="536" y="448" width="1" height="1"/><rect x="541" y="448" width="3" height="1"/><rect x="547" y="448" width="3" height="1"/><rect x="554" y="448" width="1" height="1"/><rect x="559" y="448" width="3" height="1"/><rect x="565" y="448" width="3" height="1"/></g>
<path d="M35 460.8 L40.5 466.3 L35 471.8 L29.5 466.3 Z" fill="#c8c8c8" stroke="#000" stroke-width="1"/>
<path d="M552.5 445.5 L570.5 445.5 L570.5 450.5 L561.5 458.5 L552.5 450.5 Z" fill="#fafafa" stroke="#303030" stroke-width="1"/>
<path d="M557 450.3 L565.5 450.3 L561.2 454 Z" fill="#808080"/>
<rect x="561" y="458" width="1.5" height="15" fill="#000"/>
<path d="M561.6 461 L567 466.3 L561.6 471.6 L556.2 466.3 Z" fill="#d01020" stroke="#300" stroke-width="0.8"/>
</svg>
<!-- separator -->
<div class="a" style="left:19px;top:495px;width:595px;height:1px;background:#a0a0a0"></div>
<div class="a" style="left:19px;top:496px;width:595px;height:1px;background:#fff"></div>

<!-- controls -->


<div class="a" style="left:76px;top:512px;width:45px;height:19px;border:1px solid #c4c4c4;background:#fff"></div>
<div class="a" style="left:104px;top:513px;width:16px;height:17px;border:1px solid #c4c4cc;background:#f0f0f4"></div>
<div class="a" style="left:105px;top:521px;width:14px;height:2px;background:#b4b4c0"></div>
<svg class="a" style="left:104px;top:512px" width="16" height="19" viewBox="0 0 16 19"><path d="M4.6 7 L7.4 4 L10.2 7 Z M4.6 11.8 L10.2 11.8 L7.4 14.8 Z" fill="#606072"/></svg>
<div class="a" style="left:76px;top:538px;width:45px;height:19px;border:1px solid #c4c4c4;background:#fff"></div>
<div class="a" style="left:104px;top:539px;width:16px;height:17px;border:1px solid #c4c4cc;background:#f0f0f4"></div>
<div class="a" style="left:105px;top:547px;width:14px;height:2px;background:#b4b4c0"></div>
<svg class="a" style="left:104px;top:538px" width="16" height="19" viewBox="0 0 16 19"><path d="M4.6 7 L7.4 4 L10.2 7 Z M4.6 11.8 L10.2 11.8 L7.4 14.8 Z" fill="#606072"/></svg>





<div class="a" style="left:175px;top:513px;width:13px;height:13px;border:1px solid #808080;background:#fbf6fb"></div>
<div class="a" style="left:177px;top:515px;width:9px;height:9px;background:linear-gradient(135deg,#e8d4ea,#f6e8f6)"></div>
<svg class="a" style="left:175px;top:513px" width="13" height="13" viewBox="0 0 13 13"><path d="M3 6.6 L5.3 9.6 L10 2.8" fill="none" stroke="#7a4a80" stroke-width="1.7"/></svg>

<div class="a" style="left:261px;top:514px;width:12px;height:12px;background:#000"></div>

<div class="a" style="left:391px;top:513px;width:13px;height:13px;border:1px solid #8e8f8f;background:linear-gradient(135deg,#cfcfcf,#f6f6f6)"></div>


<!-- glyphs -->
<svg class="a" style="left:0;top:0" width="614" height="604" viewBox="0 0 614 604" shape-rendering="crispEdges"><g opacity="0.45" transform="translate(1 0)"><g fill="#1a2a34"><rect x="23" y="6" width="1" height="1"/><rect x="28" y="6" width="1" height="1"/><rect x="21" y="7" width="11" height="1"/><rect x="21" y="8" width="1" height="1"/><rect x="25" y="8" width="1" height="1"/><rect x="21" y="9" width="5" height="1"/><rect x="28" y="9" width="1" height="1"/><rect x="30" y="9" width="1" height="1"/><rect x="21" y="10" width="1" height="1"/><rect x="25" y="10" width="1" height="1"/><rect x="28" y="10" width="1" height="1"/><rect x="30" y="10" width="1" height="1"/><rect x="21" y="11" width="5" height="1"/><rect x="30" y="11" width="1" height="1"/><rect x="21" y="12" width="1" height="1"/><rect x="25" y="12" width="1" height="1"/><rect x="29" y="12" width="2" height="1"/><rect x="24" y="13" width="1" height="1"/><rect x="21" y="14" width="10" height="1"/><rect x="24" y="15" width="1" height="1"/><rect x="30" y="15" width="1" height="1"/><rect x="20" y="16" width="4" height="1"/><rect x="26" y="16" width="5" height="1"/><rect x="16" y="6" width="1" height="1"/><rect x="15" y="7" width="1" height="1"/><rect x="17" y="7" width="1" height="1"/><rect x="13" y="8" width="6" height="1"/><rect x="15" y="9" width="1" height="1"/><rect x="17" y="9" width="1" height="1"/><rect x="12" y="10" width="8" height="1"/><rect x="13" y="12" width="2" height="1"/><rect x="16" y="12" width="2" height="1"/><rect x="15" y="13" width="2" height="1"/><rect x="13" y="14" width="2" height="1"/><rect x="17" y="14" width="1" height="1"/><rect x="15" y="15" width="2" height="1"/><rect x="12" y="16" width="3" height="1"/></g><g fill="#6a8a84"><rect x="10" y="6" width="1" height="1"/><rect x="10" y="7" width="1" height="1"/><rect x="9" y="8" width="2" height="1"/><rect x="9" y="9" width="2" height="1"/><rect x="8" y="10" width="1" height="1"/><rect x="10" y="10" width="1" height="1"/><rect x="10" y="11" width="1" height="1"/><rect x="12" y="11" width="1" height="1"/><rect x="10" y="12" width="1" height="1"/><rect x="12" y="12" width="1" height="1"/><rect x="10" y="13" width="1" height="1"/><rect x="12" y="13" width="1" height="1"/><rect x="10" y="14" width="1" height="1"/><rect x="10" y="15" width="1" height="1"/><rect x="10" y="16" width="1" height="1"/></g></g><g opacity="0.25" transform="translate(0 1)"><g fill="#1a2a34"><rect x="23" y="6" width="1" height="1"/><rect x="28" y="6" width="1" height="1"/><rect x="21" y="7" width="11" height="1"/><rect x="21" y="8" width="1" height="1"/><rect x="25" y="8" width="1" height="1"/><rect x="21" y="9" width="5" height="1"/><rect x="28" y="9" width="1" height="1"/><rect x="30" y="9" width="1" height="1"/><rect x="21" y="10" width="1" height="1"/><rect x="25" y="10" width="1" height="1"/><rect x="28" y="10" width="1" height="1"/><rect x="30" y="10" width="1" height="1"/><rect x="21" y="11" width="5" height="1"/><rect x="30" y="11" width="1" height="1"/><rect x="21" y="12" width="1" height="1"/><rect x="25" y="12" width="1" height="1"/><rect x="29" y="12" width="2" height="1"/><rect x="24" y="13" width="1" height="1"/><rect x="21" y="14" width="10" height="1"/><rect x="24" y="15" width="1" height="1"/><rect x="30" y="15" width="1" height="1"/><rect x="20" y="16" width="4" height="1"/><rect x="26" y="16" width="5" height="1"/><rect x="16" y="6" width="1" height="1"/><rect x="15" y="7" width="1" height="1"/><rect x="17" y="7" width="1" height="1"/><rect x="13" y="8" width="6" height="1"/><rect x="15" y="9" width="1" height="1"/><rect x="17" y="9" width="1" height="1"/><rect x="12" y="10" width="8" height="1"/><rect x="13" y="12" width="2" height="1"/><rect x="16" y="12" width="2" height="1"/><rect x="15" y="13" width="2" height="1"/><rect x="13" y="14" width="2" height="1"/><rect x="17" y="14" width="1" height="1"/><rect x="15" y="15" width="2" height="1"/><rect x="12" y="16" width="3" height="1"/></g></g><g fill="#141c24"><rect x="23" y="6" width="1" height="1"/><rect x="28" y="6" width="1" height="1"/><rect x="21" y="7" width="11" height="1"/><rect x="21" y="8" width="1" height="1"/><rect x="25" y="8" width="1" height="1"/><rect x="21" y="9" width="5" height="1"/><rect x="28" y="9" width="1" height="1"/><rect x="30" y="9" width="1" height="1"/><rect x="21" y="10" width="1" height="1"/><rect x="25" y="10" width="1" height="1"/><rect x="28" y="10" width="1" height="1"/><rect x="30" y="10" width="1" height="1"/><rect x="21" y="11" width="5" height="1"/><rect x="30" y="11" width="1" height="1"/><rect x="21" y="12" width="1" height="1"/><rect x="25" y="12" width="1" height="1"/><rect x="29" y="12" width="2" height="1"/><rect x="24" y="13" width="1" height="1"/><rect x="21" y="14" width="10" height="1"/><rect x="24" y="15" width="1" height="1"/><rect x="30" y="15" width="1" height="1"/><rect x="20" y="16" width="4" height="1"/><rect x="26" y="16" width="5" height="1"/><rect x="16" y="6" width="1" height="1"/><rect x="15" y="7" width="1" height="1"/><rect x="17" y="7" width="1" height="1"/><rect x="13" y="8" width="6" height="1"/><rect x="15" y="9" width="1" height="1"/><rect x="17" y="9" width="1" height="1"/><rect x="12" y="10" width="8" height="1"/><rect x="13" y="12" width="2" height="1"/><rect x="16" y="12" width="2" height="1"/><rect x="15" y="13" width="2" height="1"/><rect x="13" y="14" width="2" height="1"/><rect x="17" y="14" width="1" height="1"/><rect x="15" y="15" width="2" height="1"/><rect x="12" y="16" width="3" height="1"/></g><g fill="#50706a"><rect x="10" y="6" width="1" height="1"/><rect x="10" y="7" width="1" height="1"/><rect x="9" y="8" width="2" height="1"/><rect x="9" y="9" width="2" height="1"/><rect x="8" y="10" width="1" height="1"/><rect x="10" y="10" width="1" height="1"/><rect x="10" y="11" width="1" height="1"/><rect x="12" y="11" width="1" height="1"/><rect x="10" y="12" width="1" height="1"/><rect x="12" y="12" width="1" height="1"/><rect x="10" y="13" width="1" height="1"/><rect x="12" y="13" width="1" height="1"/><rect x="10" y="14" width="1" height="1"/><rect x="10" y="15" width="1" height="1"/><rect x="10" y="16" width="1" height="1"/></g><g fill="#000"><rect x="20" y="38" width="10" height="1"/><rect x="20" y="39" width="1" height="1"/><rect x="25" y="39" width="1" height="1"/><rect x="20" y="40" width="1" height="1"/><rect x="22" y="40" width="7" height="1"/><rect x="20" y="41" width="1" height="1"/><rect x="22" y="41" width="1" height="1"/><rect x="28" y="41" width="1" height="1"/><rect x="20" y="42" width="1" height="1"/><rect x="22" y="42" width="7" height="1"/><rect x="20" y="43" width="1" height="1"/><rect x="22" y="43" width="1" height="1"/><rect x="28" y="43" width="1" height="1"/><rect x="20" y="44" width="1" height="1"/><rect x="22" y="44" width="7" height="1"/><rect x="20" y="45" width="1" height="1"/><rect x="25" y="45" width="1" height="1"/><rect x="20" y="46" width="1" height="1"/><rect x="23" y="46" width="1" height="1"/><rect x="25" y="46" width="1" height="1"/><rect x="27" y="46" width="1" height="1"/><rect x="20" y="47" width="1" height="1"/><rect x="22" y="47" width="1" height="1"/><rect x="25" y="47" width="1" height="1"/><rect x="28" y="47" width="1" height="1"/><rect x="31" y="37" width="11" height="1"/><rect x="31" y="38" width="1" height="1"/><rect x="34" y="38" width="1" height="1"/><rect x="36" y="38" width="3" height="1"/><rect x="41" y="38" width="1" height="1"/><rect x="31" y="39" width="1" height="1"/><rect x="33" y="39" width="2" height="1"/><rect x="38" y="39" width="1" height="1"/><rect x="41" y="39" width="1" height="1"/><rect x="31" y="40" width="1" height="1"/><rect x="33" y="40" width="1" height="1"/><rect x="38" y="40" width="1" height="1"/><rect x="41" y="40" width="1" height="1"/><rect x="31" y="41" width="1" height="1"/><rect x="35" y="41" width="3" height="1"/><rect x="41" y="41" width="1" height="1"/><rect x="31" y="42" width="11" height="1"/><rect x="31" y="43" width="1" height="1"/><rect x="35" y="43" width="2" height="1"/><rect x="41" y="43" width="1" height="1"/><rect x="31" y="44" width="1" height="1"/><rect x="37" y="44" width="1" height="1"/><rect x="41" y="44" width="1" height="1"/><rect x="31" y="45" width="1" height="1"/><rect x="34" y="45" width="2" height="1"/><rect x="41" y="45" width="1" height="1"/><rect x="31" y="46" width="1" height="1"/><rect x="36" y="46" width="2" height="1"/><rect x="41" y="46" width="1" height="1"/><rect x="31" y="47" width="11" height="1"/><rect x="22" y="513" width="1" height="1"/><rect x="17" y="514" width="11" height="1"/><rect x="17" y="515" width="1" height="1"/><rect x="20" y="515" width="1" height="1"/><rect x="24" y="515" width="1" height="1"/><rect x="27" y="515" width="1" height="1"/><rect x="18" y="516" width="9" height="1"/><rect x="20" y="517" width="1" height="1"/><rect x="24" y="517" width="1" height="1"/><rect x="18" y="518" width="9" height="1"/><rect x="18" y="519" width="1" height="1"/><rect x="26" y="519" width="1" height="1"/><rect x="18" y="520" width="1" height="1"/><rect x="22" y="520" width="1" height="1"/><rect x="26" y="520" width="1" height="1"/><rect x="18" y="521" width="1" height="1"/><rect x="22" y="521" width="1" height="1"/><rect x="26" y="521" width="1" height="1"/><rect x="21" y="522" width="1" height="1"/><rect x="23" y="522" width="1" height="1"/><rect x="19" y="523" width="2" height="1"/><rect x="23" y="523" width="1" height="1"/><rect x="27" y="523" width="1" height="1"/><rect x="17" y="524" width="2" height="1"/><rect x="24" y="524" width="4" height="1"/><rect x="35" y="513" width="1" height="1"/><rect x="30" y="514" width="10" height="1"/><rect x="30" y="515" width="1" height="1"/><rect x="33" y="515" width="1" height="1"/><rect x="37" y="515" width="1" height="1"/><rect x="30" y="516" width="10" height="1"/><rect x="30" y="517" width="1" height="1"/><rect x="33" y="517" width="1" height="1"/><rect x="37" y="517" width="1" height="1"/><rect x="30" y="518" width="1" height="1"/><rect x="33" y="518" width="5" height="1"/><rect x="30" y="519" width="1" height="1"/><rect x="30" y="520" width="1" height="1"/><rect x="32" y="520" width="7" height="1"/><rect x="30" y="521" width="1" height="1"/><rect x="33" y="521" width="1" height="1"/><rect x="38" y="521" width="1" height="1"/><rect x="30" y="522" width="1" height="1"/><rect x="34" y="522" width="1" height="1"/><rect x="37" y="522" width="1" height="1"/><rect x="30" y="523" width="1" height="1"/><rect x="35" y="523" width="2" height="1"/><rect x="29" y="524" width="1" height="1"/><rect x="32" y="524" width="3" height="1"/><rect x="37" y="524" width="3" height="1"/><rect x="43" y="514" width="2" height="1"/><rect x="54" y="514" width="1" height="1"/><rect x="56" y="514" width="1" height="1"/><rect x="42" y="515" width="1" height="1"/><rect x="44" y="515" width="1" height="1"/><rect x="54" y="515" width="1" height="1"/><rect x="57" y="515" width="1" height="1"/><rect x="42" y="516" width="1" height="1"/><rect x="45" y="516" width="1" height="1"/><rect x="49" y="516" width="1" height="1"/><rect x="53" y="516" width="1" height="1"/><rect x="57" y="516" width="1" height="1"/><rect x="42" y="517" width="1" height="1"/><rect x="45" y="517" width="1" height="1"/><rect x="49" y="517" width="1" height="1"/><rect x="53" y="517" width="1" height="1"/><rect x="57" y="517" width="1" height="1"/><rect x="59" y="517" width="1" height="1"/><rect x="42" y="518" width="1" height="1"/><rect x="46" y="518" width="1" height="1"/><rect x="48" y="518" width="1" height="1"/><rect x="50" y="518" width="1" height="1"/><rect x="52" y="518" width="1" height="1"/><rect x="57" y="518" width="1" height="1"/><rect x="42" y="519" width="1" height="1"/><rect x="46" y="519" width="1" height="1"/><rect x="48" y="519" width="1" height="1"/><rect x="50" y="519" width="1" height="1"/><rect x="52" y="519" width="1" height="1"/><rect x="57" y="519" width="1" height="1"/><rect x="42" y="520" width="1" height="1"/><rect x="47" y="520" width="1" height="1"/><rect x="51" y="520" width="1" height="1"/><rect x="57" y="520" width="1" height="1"/><rect x="42" y="521" width="1" height="1"/><rect x="47" y="521" width="1" height="1"/><rect x="51" y="521" width="1" height="1"/><rect x="57" y="521" width="1" height="1"/><rect x="42" y="522" width="1" height="1"/><rect x="57" y="522" width="1" height="1"/><rect x="59" y="522" width="1" height="1"/><rect x="42" y="523" width="1" height="1"/><rect x="57" y="523" width="1" height="1"/><rect x="43" y="524" width="12" height="1"/><rect x="56" y="524" width="1" height="1"/><rect x="22" y="539" width="1" height="1"/><rect x="17" y="540" width="11" height="1"/><rect x="19" y="542" width="7" height="1"/><rect x="19" y="543" width="1" height="1"/><rect x="25" y="543" width="1" height="1"/><rect x="19" y="544" width="7" height="1"/><rect x="17" y="546" width="11" height="1"/><rect x="17" y="547" width="1" height="1"/><rect x="27" y="547" width="1" height="1"/><rect x="17" y="548" width="1" height="1"/><rect x="20" y="548" width="5" height="1"/><rect x="27" y="548" width="1" height="1"/><rect x="17" y="549" width="1" height="1"/><rect x="20" y="549" width="1" height="1"/><rect x="24" y="549" width="1" height="1"/><rect x="27" y="549" width="1" height="1"/><rect x="17" y="550" width="1" height="1"/><rect x="20" y="550" width="5" height="1"/><rect x="26" y="550" width="2" height="1"/><rect x="35" y="539" width="1" height="1"/><rect x="30" y="540" width="10" height="1"/><rect x="30" y="541" width="1" height="1"/><rect x="33" y="541" width="1" height="1"/><rect x="37" y="541" width="1" height="1"/><rect x="30" y="542" width="10" height="1"/><rect x="30" y="543" width="1" height="1"/><rect x="33" y="543" width="1" height="1"/><rect x="37" y="543" width="1" height="1"/><rect x="30" y="544" width="1" height="1"/><rect x="33" y="544" width="5" height="1"/><rect x="30" y="545" width="1" height="1"/><rect x="30" y="546" width="1" height="1"/><rect x="32" y="546" width="7" height="1"/><rect x="30" y="547" width="1" height="1"/><rect x="33" y="547" width="1" height="1"/><rect x="38" y="547" width="1" height="1"/><rect x="30" y="548" width="1" height="1"/><rect x="34" y="548" width="1" height="1"/><rect x="37" y="548" width="1" height="1"/><rect x="30" y="549" width="1" height="1"/><rect x="35" y="549" width="2" height="1"/><rect x="29" y="550" width="1" height="1"/><rect x="32" y="550" width="3" height="1"/><rect x="37" y="550" width="3" height="1"/><rect x="43" y="540" width="1" height="1"/><rect x="45" y="540" width="1" height="1"/><rect x="50" y="540" width="1" height="1"/><rect x="53" y="540" width="1" height="1"/><rect x="42" y="541" width="1" height="1"/><rect x="45" y="541" width="1" height="1"/><rect x="50" y="541" width="1" height="1"/><rect x="54" y="541" width="1" height="1"/><rect x="42" y="542" width="1" height="1"/><rect x="45" y="542" width="1" height="1"/><rect x="50" y="542" width="1" height="1"/><rect x="54" y="542" width="1" height="1"/><rect x="42" y="543" width="1" height="1"/><rect x="45" y="543" width="1" height="1"/><rect x="50" y="543" width="1" height="1"/><rect x="54" y="543" width="1" height="1"/><rect x="56" y="543" width="1" height="1"/><rect x="42" y="544" width="1" height="1"/><rect x="45" y="544" width="6" height="1"/><rect x="54" y="544" width="1" height="1"/><rect x="42" y="545" width="1" height="1"/><rect x="45" y="545" width="1" height="1"/><rect x="50" y="545" width="1" height="1"/><rect x="54" y="545" width="1" height="1"/><rect x="42" y="546" width="1" height="1"/><rect x="45" y="546" width="1" height="1"/><rect x="50" y="546" width="1" height="1"/><rect x="54" y="546" width="1" height="1"/><rect x="42" y="547" width="1" height="1"/><rect x="45" y="547" width="1" height="1"/><rect x="50" y="547" width="1" height="1"/><rect x="54" y="547" width="1" height="1"/><rect x="42" y="548" width="1" height="1"/><rect x="45" y="548" width="1" height="1"/><rect x="50" y="548" width="1" height="1"/><rect x="54" y="548" width="1" height="1"/><rect x="56" y="548" width="1" height="1"/><rect x="42" y="549" width="1" height="1"/><rect x="54" y="549" width="1" height="1"/><rect x="43" y="550" width="9" height="1"/><rect x="53" y="550" width="1" height="1"/><rect x="192" y="514" width="1" height="1"/><rect x="197" y="514" width="1" height="1"/><rect x="192" y="515" width="1" height="1"/><rect x="194" y="515" width="8" height="1"/><rect x="192" y="516" width="1" height="1"/><rect x="197" y="516" width="1" height="1"/><rect x="191" y="517" width="3" height="1"/><rect x="195" y="517" width="6" height="1"/><rect x="192" y="518" width="1" height="1"/><rect x="195" y="518" width="1" height="1"/><rect x="200" y="518" width="1" height="1"/><rect x="192" y="519" width="1" height="1"/><rect x="195" y="519" width="6" height="1"/><rect x="192" y="520" width="1" height="1"/><rect x="195" y="520" width="1" height="1"/><rect x="200" y="520" width="1" height="1"/><rect x="192" y="521" width="1" height="1"/><rect x="195" y="521" width="6" height="1"/><rect x="192" y="522" width="1" height="1"/><rect x="195" y="522" width="1" height="1"/><rect x="200" y="522" width="1" height="1"/><rect x="191" y="523" width="11" height="1"/><rect x="196" y="524" width="1" height="1"/><rect x="199" y="524" width="1" height="1"/><rect x="195" y="525" width="1" height="1"/><rect x="200" y="525" width="1" height="1"/><rect x="207" y="514" width="1" height="1"/><rect x="208" y="515" width="1" height="1"/><rect x="203" y="516" width="11" height="1"/><rect x="207" y="517" width="1" height="1"/><rect x="206" y="518" width="1" height="1"/><rect x="210" y="518" width="1" height="1"/><rect x="205" y="519" width="1" height="1"/><rect x="211" y="519" width="1" height="1"/><rect x="204" y="520" width="9" height="1"/><rect x="206" y="521" width="1" height="1"/><rect x="210" y="521" width="1" height="1"/><rect x="212" y="521" width="1" height="1"/><rect x="206" y="522" width="1" height="1"/><rect x="210" y="522" width="1" height="1"/><rect x="206" y="523" width="1" height="1"/><rect x="210" y="523" width="1" height="1"/><rect x="213" y="523" width="1" height="1"/><rect x="205" y="524" width="1" height="1"/><rect x="210" y="524" width="1" height="1"/><rect x="213" y="524" width="1" height="1"/><rect x="203" y="525" width="2" height="1"/><rect x="210" y="525" width="4" height="1"/><rect x="218" y="514" width="1" height="1"/><rect x="217" y="515" width="7" height="1"/><rect x="216" y="516" width="1" height="1"/><rect x="223" y="516" width="1" height="1"/><rect x="215" y="517" width="1" height="1"/><rect x="222" y="517" width="1" height="1"/><rect x="216" y="518" width="9" height="1"/><rect x="216" y="519" width="1" height="1"/><rect x="220" y="519" width="1" height="1"/><rect x="224" y="519" width="1" height="1"/><rect x="216" y="520" width="9" height="1"/><rect x="216" y="521" width="1" height="1"/><rect x="216" y="522" width="1" height="1"/><rect x="216" y="523" width="1" height="1"/><rect x="225" y="523" width="1" height="1"/><rect x="216" y="524" width="1" height="1"/><rect x="225" y="524" width="1" height="1"/><rect x="217" y="525" width="9" height="1"/><rect x="229" y="515" width="1" height="1"/><rect x="231" y="515" width="5" height="1"/><rect x="237" y="515" width="1" height="1"/><rect x="228" y="516" width="1" height="1"/><rect x="231" y="516" width="1" height="1"/><rect x="238" y="516" width="1" height="1"/><rect x="228" y="517" width="1" height="1"/><rect x="231" y="517" width="1" height="1"/><rect x="238" y="517" width="1" height="1"/><rect x="228" y="518" width="1" height="1"/><rect x="231" y="518" width="1" height="1"/><rect x="238" y="518" width="1" height="1"/><rect x="228" y="519" width="1" height="1"/><rect x="231" y="519" width="4" height="1"/><rect x="238" y="519" width="1" height="1"/><rect x="228" y="520" width="1" height="1"/><rect x="231" y="520" width="1" height="1"/><rect x="238" y="520" width="1" height="1"/><rect x="228" y="521" width="1" height="1"/><rect x="231" y="521" width="1" height="1"/><rect x="238" y="521" width="1" height="1"/><rect x="228" y="522" width="1" height="1"/><rect x="231" y="522" width="1" height="1"/><rect x="238" y="522" width="1" height="1"/><rect x="228" y="523" width="1" height="1"/><rect x="231" y="523" width="1" height="1"/><rect x="238" y="523" width="1" height="1"/><rect x="228" y="524" width="1" height="1"/><rect x="238" y="524" width="1" height="1"/><rect x="229" y="525" width="7" height="1"/><rect x="237" y="525" width="1" height="1"/><rect x="409" y="514" width="1" height="1"/><rect x="413" y="514" width="1" height="1"/><rect x="407" y="515" width="5" height="1"/><rect x="413" y="515" width="3" height="1"/><rect x="409" y="516" width="1" height="1"/><rect x="412" y="516" width="1" height="1"/><rect x="415" y="516" width="1" height="1"/><rect x="408" y="517" width="4" height="1"/><rect x="414" y="517" width="1" height="1"/><rect x="407" y="518" width="10" height="1"/><rect x="408" y="519" width="1" height="1"/><rect x="410" y="519" width="1" height="1"/><rect x="412" y="519" width="1" height="1"/><rect x="416" y="519" width="1" height="1"/><rect x="408" y="520" width="3" height="1"/><rect x="412" y="520" width="6" height="1"/><rect x="408" y="521" width="1" height="1"/><rect x="410" y="521" width="1" height="1"/><rect x="415" y="521" width="2" height="1"/><rect x="408" y="522" width="3" height="1"/><rect x="412" y="522" width="5" height="1"/><rect x="408" y="523" width="1" height="1"/><rect x="410" y="523" width="1" height="1"/><rect x="415" y="523" width="1" height="1"/><rect x="408" y="524" width="1" height="1"/><rect x="410" y="524" width="1" height="1"/><rect x="415" y="524" width="1" height="1"/><rect x="408" y="525" width="1" height="1"/><rect x="410" y="525" width="1" height="1"/><rect x="413" y="525" width="3" height="1"/><rect x="425" y="514" width="1" height="1"/><rect x="425" y="515" width="1" height="1"/><rect x="425" y="516" width="1" height="1"/><rect x="421" y="517" width="1" height="1"/><rect x="425" y="517" width="1" height="1"/><rect x="421" y="518" width="1" height="1"/><rect x="425" y="518" width="4" height="1"/><rect x="421" y="519" width="1" height="1"/><rect x="425" y="519" width="1" height="1"/><rect x="421" y="520" width="1" height="1"/><rect x="425" y="520" width="1" height="1"/><rect x="421" y="521" width="1" height="1"/><rect x="425" y="521" width="1" height="1"/><rect x="421" y="522" width="1" height="1"/><rect x="425" y="522" width="1" height="1"/><rect x="421" y="523" width="1" height="1"/><rect x="425" y="523" width="1" height="1"/><rect x="421" y="524" width="1" height="1"/><rect x="425" y="524" width="1" height="1"/><rect x="419" y="525" width="11" height="1"/><rect x="433" y="515" width="1" height="1"/><rect x="435" y="515" width="1" height="1"/><rect x="440" y="515" width="1" height="1"/><rect x="443" y="515" width="1" height="1"/><rect x="432" y="516" width="1" height="1"/><rect x="435" y="516" width="2" height="1"/><rect x="440" y="516" width="1" height="1"/><rect x="444" y="516" width="1" height="1"/><rect x="432" y="517" width="1" height="1"/><rect x="435" y="517" width="1" height="1"/><rect x="437" y="517" width="1" height="1"/><rect x="440" y="517" width="1" height="1"/><rect x="444" y="517" width="1" height="1"/><rect x="432" y="518" width="1" height="1"/><rect x="435" y="518" width="1" height="1"/><rect x="437" y="518" width="1" height="1"/><rect x="440" y="518" width="1" height="1"/><rect x="444" y="518" width="1" height="1"/><rect x="432" y="519" width="1" height="1"/><rect x="435" y="519" width="1" height="1"/><rect x="438" y="519" width="1" height="1"/><rect x="440" y="519" width="1" height="1"/><rect x="444" y="519" width="1" height="1"/><rect x="432" y="520" width="1" height="1"/><rect x="435" y="520" width="1" height="1"/><rect x="438" y="520" width="1" height="1"/><rect x="440" y="520" width="1" height="1"/><rect x="444" y="520" width="1" height="1"/><rect x="432" y="521" width="1" height="1"/><rect x="435" y="521" width="1" height="1"/><rect x="439" y="521" width="2" height="1"/><rect x="444" y="521" width="1" height="1"/><rect x="432" y="522" width="1" height="1"/><rect x="435" y="522" width="1" height="1"/><rect x="439" y="522" width="2" height="1"/><rect x="444" y="522" width="1" height="1"/><rect x="432" y="523" width="1" height="1"/><rect x="435" y="523" width="1" height="1"/><rect x="440" y="523" width="1" height="1"/><rect x="444" y="523" width="1" height="1"/><rect x="432" y="524" width="1" height="1"/><rect x="444" y="524" width="1" height="1"/><rect x="433" y="525" width="9" height="1"/><rect x="443" y="525" width="1" height="1"/><rect x="81" y="517" width="2" height="1"/><rect x="87" y="517" width="3" height="1"/><rect x="93" y="517" width="3" height="1"/><rect x="80" y="518" width="1" height="1"/><rect x="82" y="518" width="1" height="1"/><rect x="86" y="518" width="1" height="1"/><rect x="90" y="518" width="1" height="1"/><rect x="92" y="518" width="1" height="1"/><rect x="96" y="518" width="1" height="1"/><rect x="82" y="519" width="1" height="1"/><rect x="86" y="519" width="1" height="1"/><rect x="90" y="519" width="1" height="1"/><rect x="92" y="519" width="1" height="1"/><rect x="96" y="519" width="1" height="1"/><rect x="82" y="520" width="1" height="1"/><rect x="86" y="520" width="1" height="1"/><rect x="90" y="520" width="1" height="1"/><rect x="92" y="520" width="1" height="1"/><rect x="96" y="520" width="1" height="1"/><rect x="82" y="521" width="1" height="1"/><rect x="86" y="521" width="1" height="1"/><rect x="90" y="521" width="1" height="1"/><rect x="92" y="521" width="1" height="1"/><rect x="96" y="521" width="1" height="1"/><rect x="82" y="522" width="1" height="1"/><rect x="86" y="522" width="1" height="1"/><rect x="90" y="522" width="1" height="1"/><rect x="92" y="522" width="1" height="1"/><rect x="96" y="522" width="1" height="1"/><rect x="82" y="523" width="1" height="1"/><rect x="86" y="523" width="1" height="1"/><rect x="90" y="523" width="1" height="1"/><rect x="92" y="523" width="1" height="1"/><rect x="96" y="523" width="1" height="1"/><rect x="82" y="524" width="1" height="1"/><rect x="86" y="524" width="1" height="1"/><rect x="90" y="524" width="1" height="1"/><rect x="92" y="524" width="1" height="1"/><rect x="96" y="524" width="1" height="1"/><rect x="82" y="525" width="1" height="1"/><rect x="87" y="525" width="3" height="1"/><rect x="93" y="525" width="3" height="1"/><rect x="80" y="543" width="5" height="1"/><rect x="87" y="543" width="3" height="1"/><rect x="80" y="544" width="1" height="1"/><rect x="86" y="544" width="1" height="1"/><rect x="90" y="544" width="1" height="1"/><rect x="80" y="545" width="1" height="1"/><rect x="86" y="545" width="1" height="1"/><rect x="90" y="545" width="1" height="1"/><rect x="80" y="546" width="4" height="1"/><rect x="86" y="546" width="1" height="1"/><rect x="90" y="546" width="1" height="1"/><rect x="84" y="547" width="1" height="1"/><rect x="86" y="547" width="1" height="1"/><rect x="90" y="547" width="1" height="1"/><rect x="84" y="548" width="1" height="1"/><rect x="86" y="548" width="1" height="1"/><rect x="90" y="548" width="1" height="1"/><rect x="84" y="549" width="1" height="1"/><rect x="86" y="549" width="1" height="1"/><rect x="90" y="549" width="1" height="1"/><rect x="80" y="550" width="1" height="1"/><rect x="84" y="550" width="1" height="1"/><rect x="86" y="550" width="1" height="1"/><rect x="90" y="550" width="1" height="1"/><rect x="81" y="551" width="3" height="1"/><rect x="87" y="551" width="3" height="1"/><rect x="126" y="514" width="2" height="1"/><rect x="125" y="515" width="1" height="1"/><rect x="128" y="515" width="1" height="1"/><rect x="131" y="515" width="1" height="1"/><rect x="126" y="516" width="2" height="1"/><rect x="130" y="516" width="1" height="1"/><rect x="129" y="517" width="1" height="1"/><rect x="128" y="518" width="1" height="1"/><rect x="127" y="519" width="1" height="1"/><rect x="126" y="520" width="1" height="1"/><rect x="129" y="520" width="2" height="1"/><rect x="125" y="521" width="1" height="1"/><rect x="128" y="521" width="1" height="1"/><rect x="131" y="521" width="1" height="1"/><rect x="129" y="522" width="2" height="1"/><rect x="126" y="540" width="2" height="1"/><rect x="125" y="541" width="1" height="1"/><rect x="128" y="541" width="1" height="1"/><rect x="131" y="541" width="1" height="1"/><rect x="126" y="542" width="2" height="1"/><rect x="130" y="542" width="1" height="1"/><rect x="129" y="543" width="1" height="1"/><rect x="128" y="544" width="1" height="1"/><rect x="127" y="545" width="1" height="1"/><rect x="126" y="546" width="1" height="1"/><rect x="129" y="546" width="2" height="1"/><rect x="125" y="547" width="1" height="1"/><rect x="128" y="547" width="1" height="1"/><rect x="131" y="547" width="1" height="1"/><rect x="129" y="548" width="2" height="1"/></g></svg>
<!-- watermark -->
<svg class="a" style="left:500px;top:562px" width="50" height="40" viewBox="500 562 50 40">
<defs>
<radialGradient id="sph" cx="0.45" cy="0.55" r="0.6"><stop offset="0" stop-color="#ffffff"/><stop offset="0.6" stop-color="#f2f4f6"/><stop offset="1" stop-color="#c8d0d6"/></radialGradient>
<linearGradient id="sw" x1="0" y1="0" x2="1" y2="0.4"><stop offset="0" stop-color="#2a86a0"/><stop offset="0.5" stop-color="#36b4d4"/><stop offset="1" stop-color="#58d0ee"/></linearGradient>
<linearGradient id="sw2" x1="0" y1="0" x2="0" y2="1"><stop offset="0" stop-color="#2a7088"/><stop offset="1" stop-color="#40b8d8"/></linearGradient>
</defs>
<circle cx="523.5" cy="590.5" r="14" fill="url(#sph)"/>
<path d="M509 586 C510 579 514 574 520 572 C526 570 531 571 534.5 571.5 L536 573 C532 575 533 578 534 583 C528 582 522 582 519 583 C515 580 512 582 509 586 Z" fill="url(#sw)"/>
<path d="M533.5 585 C537 585 540 586 541 588 C540 594 538 598 535 602 L532 602 C534 596 534 590 533.5 585 Z" fill="url(#sw2)"/>
</svg>
<svg class="a" style="left:547px;top:578px" width="66" height="17" viewBox="0 -0.5 66 17">
<g fill="none" stroke="#3cb6da" stroke-width="2.6" stroke-linecap="square" stroke-linejoin="miter">
<path d="M2 2 L14 1 M9 2.5 L4 6.5 H10.5 L4 11 L13 10 M8.5 10 V15 M4.5 12.5 L2 14.5 M11.5 12.5 L14 14.5"/>
<g transform="translate(16 0)"><path d="M4.5 1 L1.5 5.5 H5 L1.5 10 L6 9 M1.5 14 L6 12 M11 0.5 V2 M7 3.5 H15 M10 4.5 L8 7.5 H14 M9.5 8.5 V11 L7.5 15 M12.5 8.5 V14 H15"/></g>
<g transform="translate(32 0)"><path d="M2 3 H14 M1 8 H15 M8 1 V8 L2 15 M8 8 L14 15"/></g>
<g transform="translate(48 0)"><path d="M1 6 H6 M3.5 2 V12.5 M1 14 L6 11.5 M7 6.5 L15 5 V10.5 H13 M9 2.5 V13.5 H15 V11.5 M12 1 V10.5"/></g>
</g></svg>
</body></html>
